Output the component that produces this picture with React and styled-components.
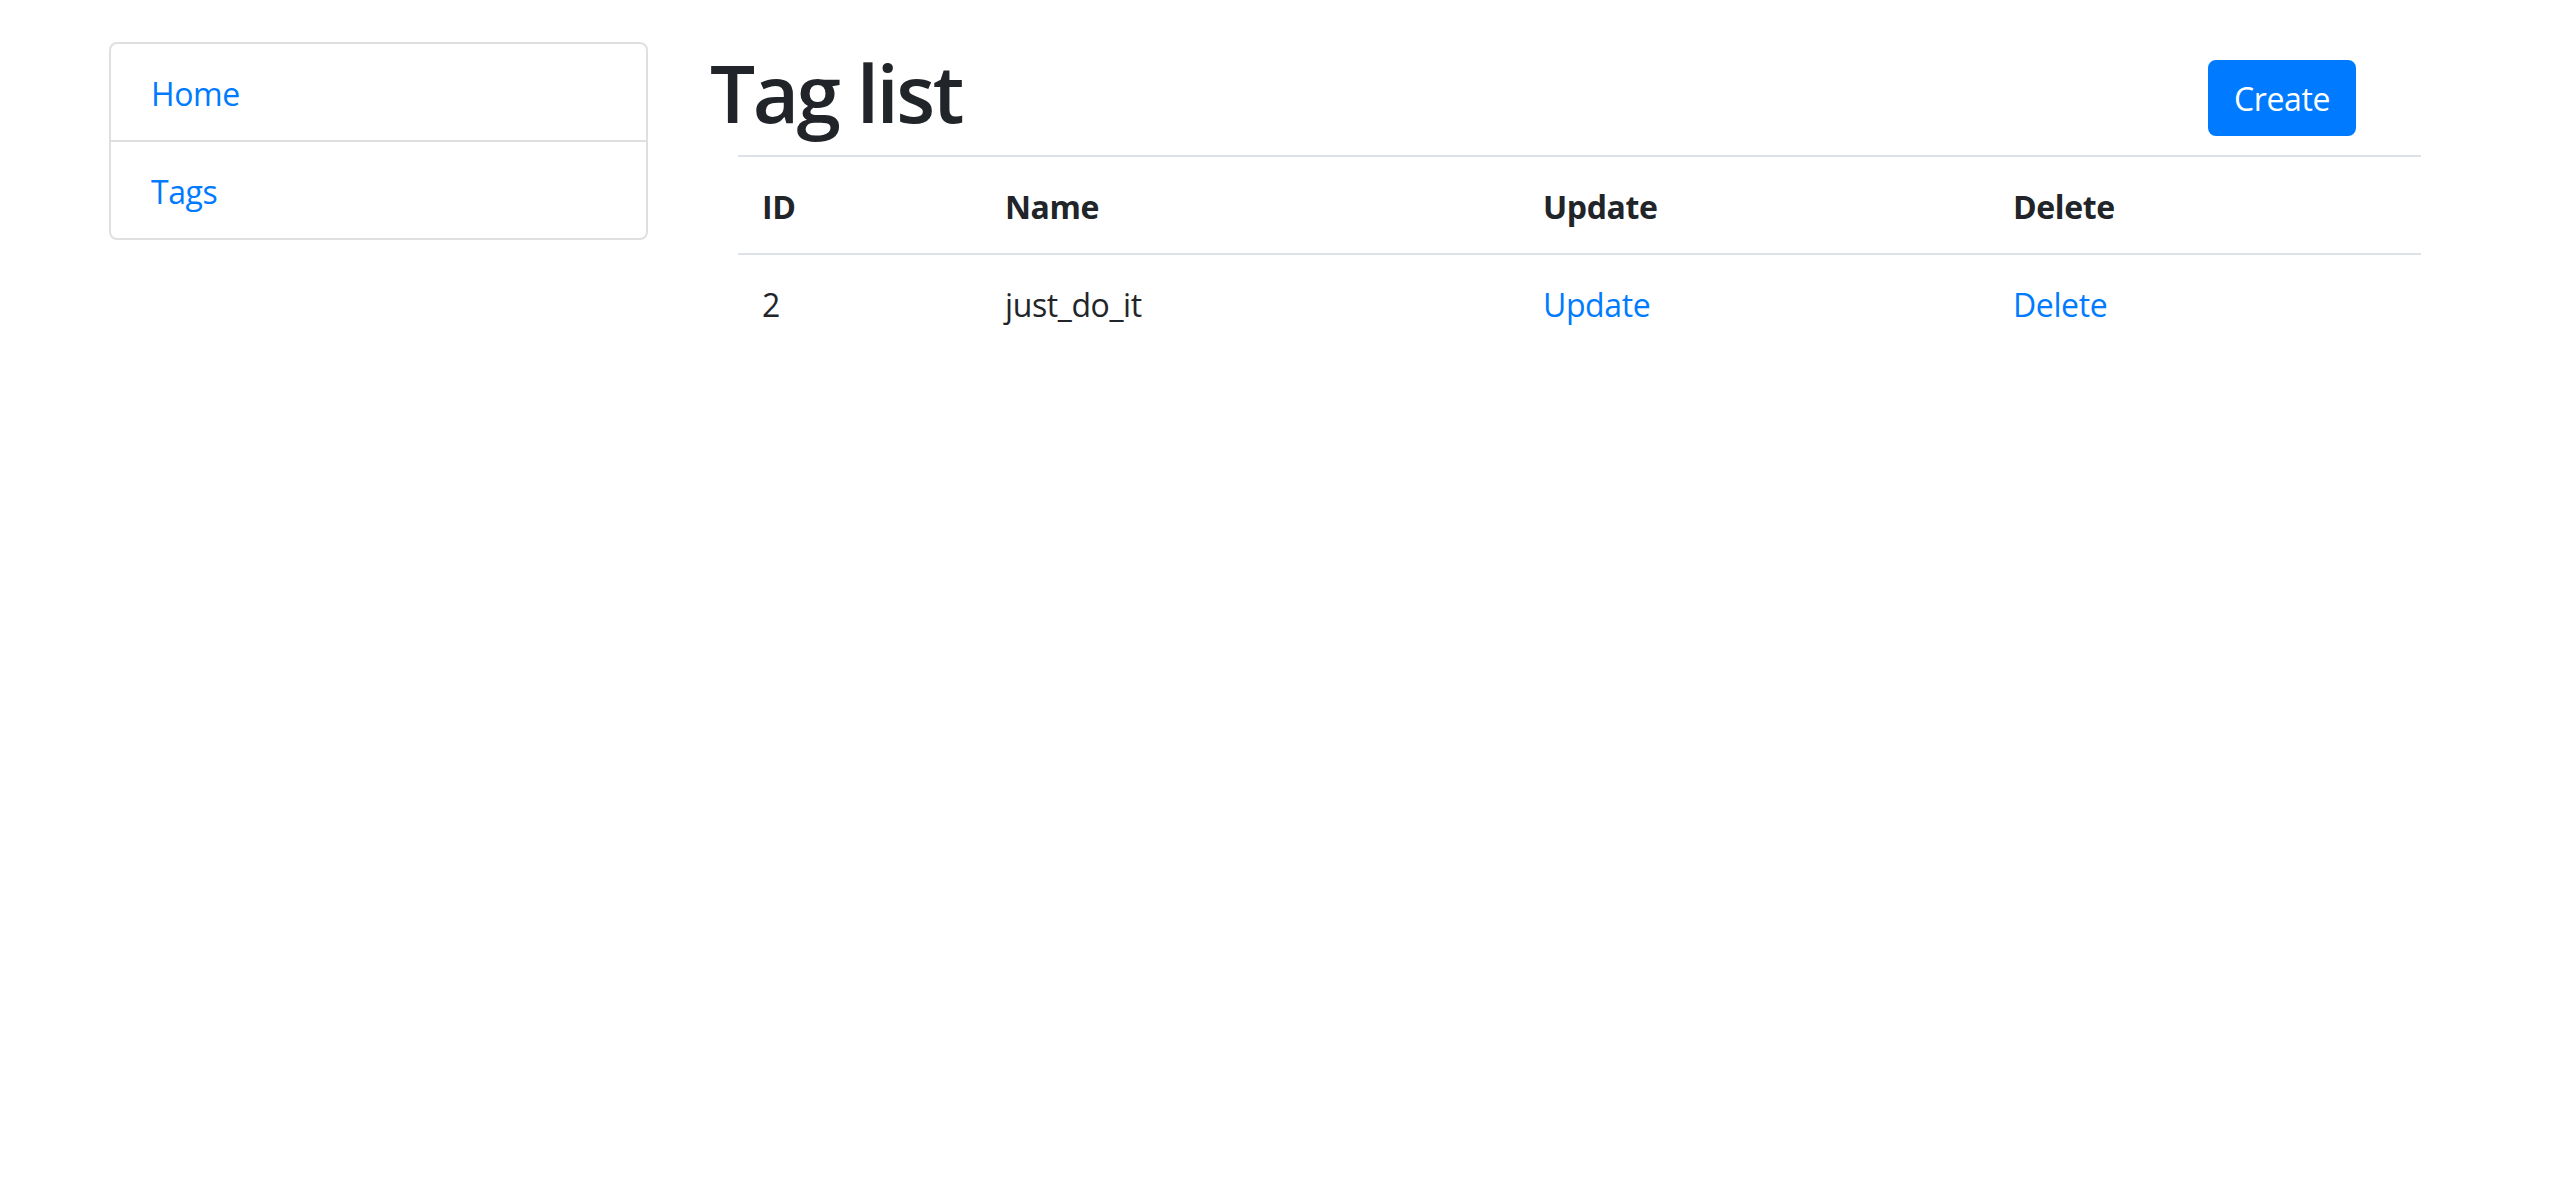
import React from "react";
import styled, { createGlobalStyle } from "styled-components";

const Global = createGlobalStyle`
  html, body { margin: 0; padding: 0; background: #fff; }
  body {
    font-family: "Open Sans", "Noto Sans", "Liberation Sans", sans-serif;
    font-size: 32px;
    line-height: 48px;
    color: #212529;
    letter-spacing: -0.4px;
  }
  * { box-sizing: border-box; }
`;

const Page = styled.div`
  display: flex;
  align-items: flex-start;
  padding: 42px 0 0 109px;
`;

const Sidebar = styled.ul`
  list-style: none;
  margin: 0;
  padding: 0;
  width: 539px;
  flex: none;
  border: 2px solid rgba(0, 0, 0, 0.125);
  border-radius: 8px;
`;

const SideItem = styled.li`
  padding: 26px 40px 22px;
  line-height: 48px;
  & + & {
    border-top: 2px solid rgba(0, 0, 0, 0.125);
  }
`;

const Link = styled.a`
  color: #007bff;
  text-decoration: none;
  cursor: pointer;
`;

const Main = styled.main`
  margin-left: 62px;
  width: 1711px;
  flex: none;
`;

const Header = styled.div`
  display: flex;
  justify-content: space-between;
  align-items: flex-start;
  padding-right: 65px;
  margin-bottom: 17px;
`;

const Title = styled.h1`
  margin: 0;
  padding-top: 2px;
  height: 96px;
  font-size: 80px;
  line-height: 96px;
  font-weight: 600;
  letter-spacing: -2.5px;
`;

const Button = styled.button`
  margin-top: 18px;
  font-family: inherit;
  font-size: 32px;
  letter-spacing: -0.4px;
  line-height: 48px;
  padding: 13px 24px 11px;
  border: 2px solid #007bff;
  background: #007bff;
  color: #fff;
  border-radius: 8px;
  cursor: pointer;
`;

const Table = styled.table`
  margin-left: 28px;
  width: 1683px;
  border-collapse: collapse;
  table-layout: fixed;
`;

const Cell = styled.td`
  width: ${(p) => p.$w}px;
  padding: 26px 24px 22px;
  border-top: 2px solid #dee2e6;
  text-align: left;
  vertical-align: top;
  font-weight: ${(p) => (p.$head ? 700 : 400)};
  line-height: 48px;
`;

const cols = [243, 538, 470, 432];

export default function App() {
  return (
    <>
      <Global />
      <Page>
        <Sidebar>
          <SideItem>
            <Link>Home</Link>
          </SideItem>
          <SideItem>
            <Link>Tags</Link>
          </SideItem>
        </Sidebar>
        <Main>
          <Header>
            <Title>Tag list</Title>
            <Button>Create</Button>
          </Header>
          <Table>
            <tbody>
              <tr>
                {["ID", "Name", "Update", "Delete"].map((h, i) => (
                  <Cell as="th" key={h} $w={cols[i]} $head>
                    {h}
                  </Cell>
                ))}
              </tr>
              <tr>
                <Cell $w={cols[0]}>2</Cell>
                <Cell $w={cols[1]}>just_do_it</Cell>
                <Cell $w={cols[2]}>
                  <Link>Update</Link>
                </Cell>
                <Cell $w={cols[3]}>
                  <Link>Delete</Link>
                </Cell>
              </tr>
            </tbody>
          </Table>
        </Main>
      </Page>
    </>
  );
}
